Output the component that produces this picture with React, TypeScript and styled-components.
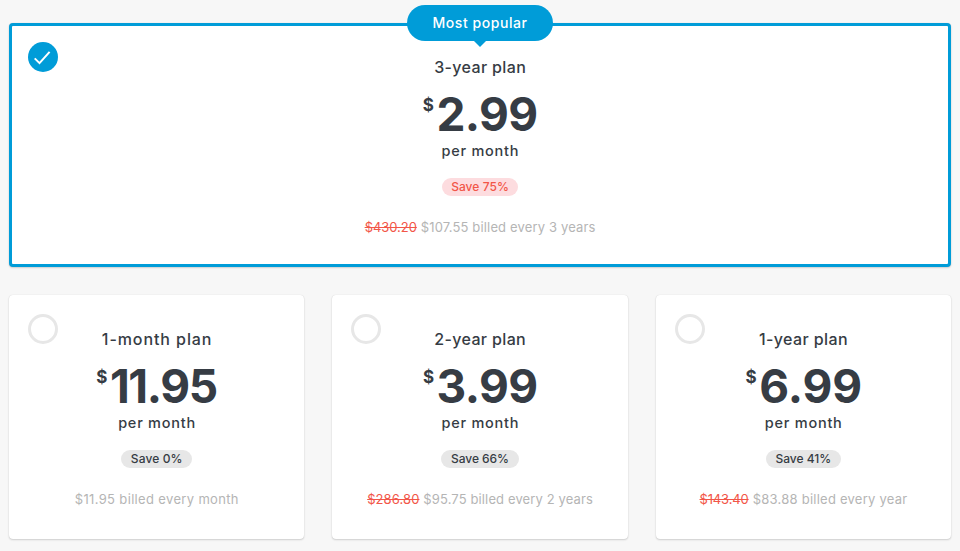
import React from "react";
import styled, { createGlobalStyle } from "styled-components";

const blue = "#009cd8";
const ink = "#363c44";
const red = "#f25648";

const GlobalStyle = createGlobalStyle`
  *, *::before, *::after { box-sizing: border-box; }
  body { margin: 0; background: #f7f7f7; }
`;

const Page = styled.main`
  display: flex;
  flex-direction: column;
  gap: 28px;
  height: 551px;
  padding: 23px 9px 0;
  background: #f7f7f7;
  color: ${ink};
  font-family: Inter, "Liberation Sans", sans-serif;
  font-weight: 500;
`;

const Row = styled.div`
  display: grid;
  grid-template-columns: repeat(3, 1fr);
  gap: 28px;
`;

const Card = styled.section<{ $selected: boolean }>`
  position: relative;
  display: flex;
  flex-direction: column;
  align-items: center;
  height: 244px;
  padding-top: 31px;
  border: 3px solid ${(p) => (p.$selected ? blue : "#fff")};
  border-radius: 4px;
  background: #fff;
  box-shadow: 0 1px 2px rgba(0, 0, 0, 0.16), 0 0 1px rgba(0, 0, 0, 0.14);
  white-space: nowrap;
`;

const Ribbon = styled.div`
  position: absolute;
  top: -21px;
  left: 50%;
  width: 146px;
  height: 36px;
  border-radius: 18px;
  background: ${blue};
  color: #fff;
  font-size: 14px;
  line-height: 36px;
  letter-spacing: 0.55px;
  text-align: center;
  transform: translateX(-50%);

  &::after {
    content: "";
    position: absolute;
    top: 100%;
    left: 50%;
    border: 6px solid transparent;
    border-top-color: ${blue};
    border-bottom: 0;
    transform: translateX(-50%);
  }
`;

const Radio = styled.span<{ $selected: boolean }>`
  position: absolute;
  top: 16px;
  left: 16px;
  width: 30px;
  height: 30px;
  border: ${(p) => (p.$selected ? "0" : "3px solid #e7e7e7")};
  border-radius: 50%;
  background: ${(p) => (p.$selected ? blue : "#fff")};

  svg { display: block; }
`;

const Tracked = styled.span<{ $track: number }>`
  letter-spacing: ${(p) => p.$track}px;
  margin-right: ${(p) => -p.$track}px;
`;

const Title = styled.h2`
  margin: 0;
  font-size: 16px;
  font-weight: 500;
  line-height: 20px;
`;

const Price = styled.div`
  display: flex;
  gap: 2.5px;
  height: 48px;
  margin-top: 13px;
  padding-left: 1px;
  font-size: 46px;
  font-weight: 700;
  line-height: 48px;
`;

const Currency = styled.span`
  margin-top: 5px;
  font-size: 17px;
  line-height: 20px;
`;

const Period = styled.div`
  margin-top: 3px;
  font-size: 14.5px;
  line-height: 20px;
`;

const Saving = styled.div<{ $hot: boolean; $width: number }>`
  width: ${(p) => p.$width}px;
  height: 18px;
  margin-top: 17px;
  border-radius: 9px;
  background: ${(p) => (p.$hot ? "#fddcdf" : "#e7e7e7")};
  color: ${(p) => (p.$hot ? red : ink)};
  font-size: 12px;
  line-height: 18px;
  text-align: center;
`;

const Billing = styled.div`
  display: flex;
  gap: 4px;
  margin-top: 22px;
  color: #b5b5b5;
  font-size: 13px;
  font-weight: 400;
  line-height: 18px;
`;

const OldPrice = styled.s`
  color: ${red};
`;

type Label = [text: string, tracking: number];

interface Plan {
  title: Label;
  price: Label;
  saving: Label;
  savingWidth: number;
  before?: Label;
  billed: Label;
  popular?: boolean;
}

const popularPlan: Plan = {
  title: ["3-year plan", 0.36],
  price: ["2.99", -0.6],
  saving: ["Save 75%", 0.05],
  savingWidth: 76,
  before: ["$430.20", -0.05],
  billed: ["$107.55 billed every 3 years", 0.15],
  popular: true,
};

const plans: Plan[] = [
  { title: ["1-month plan", 0.92], price: ["11.95", -1.4], saving: ["Save 0%", 0.1], savingWidth: 71, billed: ["$11.95 billed every month", 0.34] },
  { title: ["2-year plan", 0.36], price: ["3.99", -0.6], saving: ["Save 66%", -0.06], savingWidth: 78, before: ["$286.80", 0.09], billed: ["$95.75 billed every 2 years", 0.12] },
  { title: ["1-year plan", 0.4], price: ["6.99", 0], saving: ["Save 41%", 0.02], savingWidth: 75, before: ["$143.40", -0.15], billed: ["$83.88 billed every year", 0.24] },
];

function Text({ label }: { label: Label }) {
  return <Tracked $track={label[1]}>{label[0]}</Tracked>;
}

function PlanCard({ plan }: { plan: Plan }) {
  const selected = !!plan.popular;
  return (
    <Card $selected={selected}>
      {selected && <Ribbon>Most popular</Ribbon>}
      <Radio $selected={selected}>
        {selected && (
          <svg width="30" height="30" viewBox="0 0 30 30" fill="none">
            <path d="M6.7 16.4 11.5 21.1 21.6 9.8" stroke="#fff" strokeWidth="2" />
          </svg>
        )}
      </Radio>
      <Title><Text label={plan.title} /></Title>
      <Price>
        <Currency>$</Currency>
        <Text label={plan.price} />
      </Price>
      <Period><Text label={["per month", 0.75]} /></Period>
      <Saving $hot={selected} $width={plan.savingWidth}><Text label={plan.saving} /></Saving>
      <Billing>
        {plan.before && <OldPrice><Text label={plan.before} /></OldPrice>}
        <Text label={plan.billed} />
      </Billing>
    </Card>
  );
}

export default function App() {
  return (
    <Page>
      <GlobalStyle />
      <PlanCard plan={popularPlan} />
      <Row>
        {plans.map((plan) => (
          <PlanCard key={plan.title[0]} plan={plan} />
        ))}
      </Row>
    </Page>
  );
}
